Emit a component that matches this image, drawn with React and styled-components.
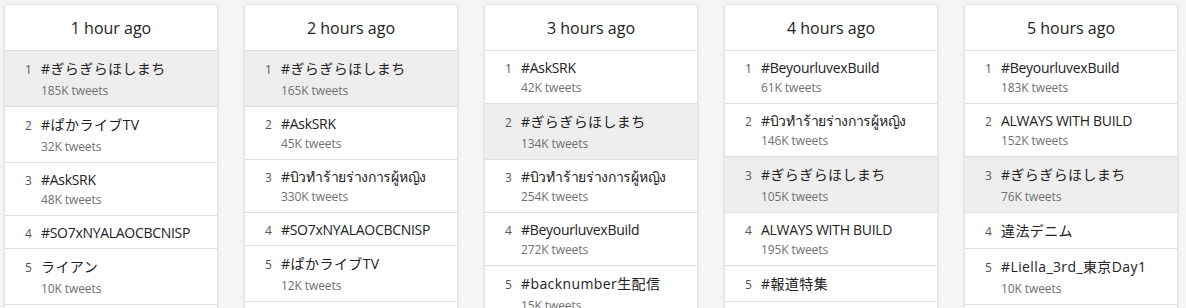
import React from 'react';
import styled, { createGlobalStyle } from 'styled-components';

const GlobalStyle = createGlobalStyle`
  body {
    margin: 0;
    background-color: #f5f5f5;
    font-family: "Open Sans", "Noto Sans", "Noto Sans CJK JP", sans-serif;
    color: #222;
  }
`

const Board = styled.div`
  display: grid;
  grid-template-columns: repeat(5, 214px);
  gap: 26px;
  padding: 4px;
  align-items: start;
`

const Card = styled.div`
  background-color: #fff;
  border: 1px solid #e4e4e4;
  border-radius: 4px;
  box-shadow: 0 1px 3px rgba(0, 0, 0, 0.12);
  min-height: 330px;
`

const CardHeader = styled.div`
  height: 45px;
  display: flex;
  align-items: center;
  justify-content: center;
  font-size: 16px;
  line-height: 22px;
  color: #222;
  border-bottom: 1px solid #dedede;
`

const List = styled.ul`
  list-style: none;
  margin: 0;
  padding: 0;
`

const Row = styled.li`
  display: flex;
  align-items: baseline;
  padding: 7px 10px 6px 20px;
  border-bottom: 1px solid #dedede;
  background-color: ${p => (p.$active ? '#eeeeee' : '#fff')};
`

const Rank = styled.span`
  width: 16px;
  flex-shrink: 0;
  font-size: 12px;
  color: #555;
`

const Body = styled.div`
  display: flex;
  flex-direction: column;
  min-width: 0;
`

const Name = styled.span`
  font-size: 14px;
  line-height: ${p => (p.$cjk ? '22px' : '19px')};
  color: #222;
  white-space: nowrap;
  letter-spacing: ${p => (p.$cjk ? '0.4px' : '-0.3px')};
`

const Count = styled.span`
  margin-top: 2px;
  font-size: 12px;
  line-height: 18px;
  color: #707070;
  letter-spacing: -0.1px;
`

const HIGHLIGHT = '#ぎらぎらほしまち';

const columns = [
  {
    label: '1 hour ago',
    trends: [
      ['#ぎらぎらほしまち', '185K'],
      ['#ぱかライブTV', '32K'],
      ['#AskSRK', '48K'],
      ['#SO7xNYALAOCBCNISP', null],
      ['ライアン', '10K'],
    ],
  },
  {
    label: '2 hours ago',
    trends: [
      ['#ぎらぎらほしまち', '165K'],
      ['#AskSRK', '45K'],
      ['#บิวทำร้ายร่างการผู้หญิง', '330K'],
      ['#SO7xNYALAOCBCNISP', null],
      ['#ぱかライブTV', '12K'],
    ],
  },
  {
    label: '3 hours ago',
    trends: [
      ['#AskSRK', '42K'],
      ['#ぎらぎらほしまち', '134K'],
      ['#บิวทำร้ายร่างการผู้หญิง', '254K'],
      ['#BeyourluvexBuild', '272K'],
      ['#backnumber生配信', '15K'],
    ],
  },
  {
    label: '4 hours ago',
    trends: [
      ['#BeyourluvexBuild', '61K'],
      ['#บิวทำร้ายร่างการผู้หญิง', '146K'],
      ['#ぎらぎらほしまち', '105K'],
      ['ALWAYS WITH BUILD', '195K'],
      ['#報道特集', null],
    ],
  },
  {
    label: '5 hours ago',
    trends: [
      ['#BeyourluvexBuild', '183K'],
      ['ALWAYS WITH BUILD', '152K'],
      ['#ぎらぎらほしまち', '76K'],
      ['違法デニム', null],
      ['#Liella_3rd_東京Day1', '10K'],
    ],
  },
];

const isCjk = text => /[\u3040-\u30ff\u4e00-\u9fff]/.test(text);

function App() {
  return (
    <>
      <GlobalStyle />
      <Board>
        {columns.map(col => (
          <Card key={col.label}>
            <CardHeader>{col.label}</CardHeader>
            <List>
              {col.trends.map(([name, count], i) => (
                <Row key={name} $active={name === HIGHLIGHT}>
                  <Rank>{i + 1}</Rank>
                  <Body>
                    <Name $cjk={isCjk(name)}>{name}</Name>
                    {count && <Count>{count} tweets</Count>}
                  </Body>
                </Row>
              ))}
            </List>
          </Card>
        ))}
      </Board>
    </>
  );
}

export default App;
